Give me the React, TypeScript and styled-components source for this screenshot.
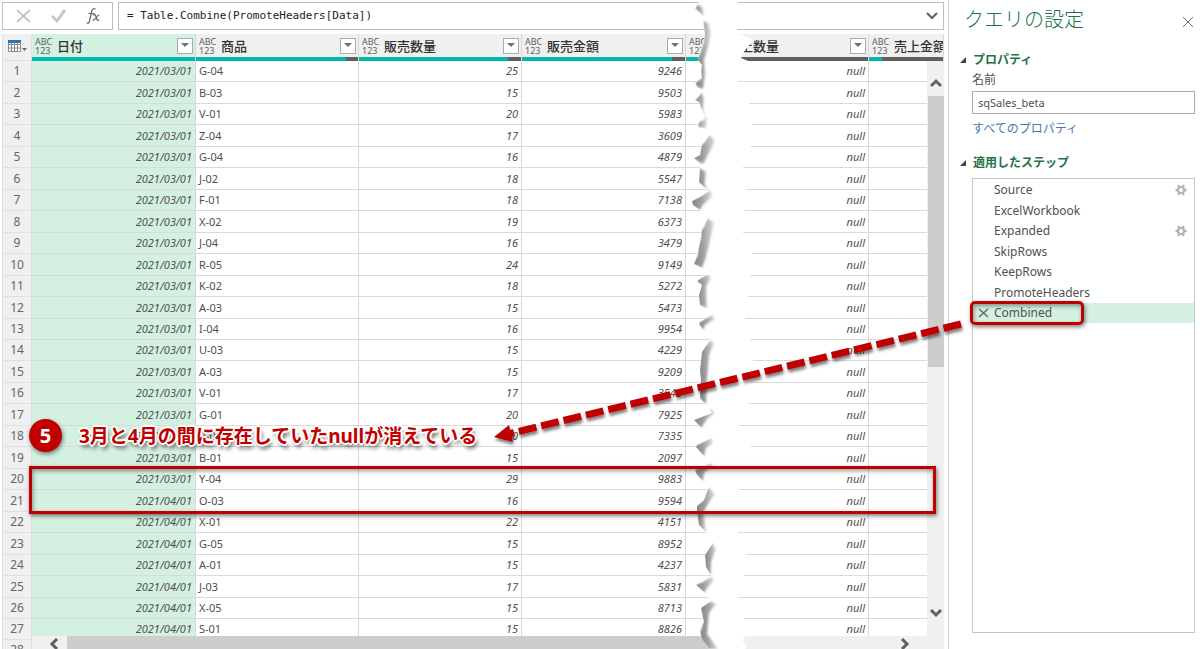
import React from "react";
import styled, { createGlobalStyle, css } from "styled-components";

const sans = `"Noto Sans", "Noto Sans CJK JP", sans-serif`;
const RED = "#c00000";

const GlobalStyle = createGlobalStyle`
  * { box-sizing: border-box; }
  html, body, #root { height: 100%; }
  body { margin: 0; background: #fff; color: #505050; font: 12px/16px ${sans}; overflow: hidden; }
  button, input { font: inherit; color: inherit; }
  button { padding: 0; border: 0; background: none; display: inline-flex; align-items: center; justify-content: center; cursor: pointer; }
`;

const Editor = styled.div`
  position: relative;
  display: grid;
  grid-template-columns: minmax(0, 1fr) 252px;
  height: 100%;
  overflow: hidden;
`;

const Workspace = styled.main`
  display: flex;
  flex-direction: column;
  gap: 4px;
  padding: 2px 4px 0 2px;
  min-width: 0;
  min-height: 0;
`;

const FormulaBar = styled.div`
  display: flex;
  gap: 5px;
  flex: 0 0 28px;
`;

const FormulaActions = styled.div`
  display: flex;
  align-items: center;
  justify-content: space-around;
  width: 111px;
  padding: 0 1px 0 4px;
  border: 1px solid #bdbdbd;
`;

const FormulaField = styled.label`
  display: flex;
  flex: 1;
  align-items: center;
  padding: 0 5px 0 8px;
  border: 1px solid #bdbdbd;
`;

const FormulaInput = styled.input`
  flex: 1;
  min-width: 0;
  padding: 0;
  border: 0;
  outline: 0;
  color: #222;
  font: 11px/16px "DejaVu Sans Mono", monospace;
`;

const GridArea = styled.div`
  position: relative;
  flex: 1;
  min-height: 0;
  overflow: hidden;
`;

const DataTable = styled.table`
  width: 100%;
  table-layout: fixed;
  border-collapse: separate;
  border-spacing: 0;
  font-size: 11px;
`;

const Col = styled.col<{ $w?: number }>`
  ${(p) => p.$w && css`width: ${p.$w}px;`}
`;

const HeadCell = styled.th<{ $selected?: boolean }>`
  height: 27px;
  padding: 0;
  background: ${(p) => (p.$selected ? "#d3f0e0" : "#f0f0f0")};
  border-right: 1px solid #d8d8d8;
  text-align: left;
  font-weight: 500;
  overflow: hidden;
`;

const HeadContent = styled.div<{ $torn?: boolean }>`
  display: flex;
  align-items: center;
  gap: ${(p) => (p.$torn ? 34 : 5)}px;
  height: 23px;
  padding: 0 2px 0 3px;
  color: #333;
  font-size: 13px;
  line-height: 20px;
  white-space: nowrap;
`;

const TypeMark = styled.span`
  flex: none;
  width: 17px;
  color: #606060;
  font: 9px/9px ${sans};
`;

const Filter = styled.button`
  flex: none;
  width: 16px;
  height: 16px;
  margin-left: auto;
  border: 1px solid #ababab;
  background: #fff;
`;

const Quality = styled.div<{ $rest: number; $lead?: number }>`
  height: 4px;
  background: ${(p) =>
    p.$lead !== undefined
      ? `linear-gradient(90deg, #01b8aa ${p.$lead}px, #606060 ${p.$lead}px)`
      : `linear-gradient(270deg, #606060 ${p.$rest}px, #01b8aa ${p.$rest}px)`};
`;

const CornerCell = styled.th`
  padding: 0 0 3px;
  background: #f0f0f0;
  border: 1px solid #e0e0e0;
  border-top: 0;
  line-height: 0;
  vertical-align: middle;
`;

const Row = styled.tr<{ $height: number }>`
  height: ${(p) => p.$height}px;
`;

const Cell = styled.td<{ $kind: "date" | "text" | "value" }>`
  padding: 0 3px;
  border-right: 1px solid #d8d8d8;
  border-bottom: 1px solid #dadada;
  line-height: 16px;
  white-space: nowrap;
  ${(p) => p.$kind !== "text" && css`text-align: right; font-style: italic;`}
  ${(p) => p.$kind === "date" && css`background: #d3f0e0;`}
`;

const IndexCell = styled.th`
  padding: 0;
  background: #f0f0f0;
  border: 1px solid #e0e0e0;
  border-top: 0;
  color: #666;
  font-size: 12px;
  font-weight: 400;
  line-height: 16px;
`;

const VerticalScroll = styled.div`
  position: absolute;
  top: 27px;
  right: 0;
  bottom: 13px;
  display: flex;
  flex-direction: column;
  align-items: center;
  width: 17px;
  padding: 16px 0 17px;
  background: #f0f0f0;
`;

const VerticalTrack = styled.div`
  flex: 1;
  width: 100%;
  padding: 7px 0 0 1px;
`;

const VerticalThumb = styled.div`
  height: 53%;
  background: #cdcdcd;
`;

const HorizontalScroll = styled.div`
  position: absolute;
  left: 30px;
  right: 0;
  bottom: 0;
  display: flex;
  align-items: center;
  gap: 7px;
  height: 13px;
  padding: 2px 33px 0 16px;
  background: #f0f0f0;
`;

const HorizontalTrack = styled.div`
  flex: 1;
  align-self: stretch;
  margin-top: -2px;
`;

const HorizontalThumb = styled.div`
  width: 80%;
  height: 100%;
  background: #cdcdcd;
`;

const Overlay = styled.svg`
  position: absolute;
  top: 0;
  left: 0;
  pointer-events: none;
`;

const Settings = styled.aside`
  display: flex;
  flex-direction: column;
  min-height: 0;
  padding: 6px 5px 16px 11px;
  border-left: 1px solid #d0d0d0;
`;

const SettingsHead = styled.header`
  display: flex;
  align-items: center;
  justify-content: space-between;
  height: 28px;
  padding-left: 4px;
`;

const Title = styled.h1`
  margin: 0;
  color: #217346;
  font-size: 20px;
  font-weight: 300;
  line-height: 28px;
`;

const SectionTitle = styled.h2<{ $gap: number }>`
  display: flex;
  align-items: center;
  gap: 7px;
  margin: ${(p) => p.$gap}px 0 0;
  color: #217346;
  font-size: 12px;
  font-weight: 700;
  line-height: 20px;
`;

const SectionBody = styled.div`
  display: flex;
  flex-direction: column;
  align-items: flex-start;
  margin-left: 12px;
`;

const NameInput = styled.input`
  width: 100%;
  height: 23px;
  margin: 1px 0 6px;
  padding: 0 5px;
  border: 1px solid #ababab;
  font-size: 11px;
`;

const NameLabel = styled.label`
  line-height: 20px;
`;

const PropertiesLink = styled.a`
  color: #4a74b0;
  text-decoration: none;
  line-height: 18px;
`;

const Steps = styled.ul`
  flex: 1;
  margin: 5px 0 0 12px;
  padding: 1px 0;
  border: 1px solid #c6c6c6;
  list-style: none;
`;

const Step = styled.li<{ $active?: boolean }>`
  display: grid;
  grid-template-columns: 21px 1fr 19px;
  align-items: center;
  justify-items: start;
  height: 20px;
  background: ${(p) => (p.$active ? "#d3f0e0" : "transparent")};

  &:nth-child(even) {
    height: 21px;
  }
`;

const StepButton = styled.button`
  grid-column: 2;
`;

const Highlight = styled.div<{ $round?: boolean }>`
  position: absolute;
  border: 3px solid ${RED};
  pointer-events: none;
  ${(p) =>
    p.$round
      ? css`top: 301px; right: 116px; width: 114px; height: 24px; border-radius: 5px;`
      : css`top: 466px; left: 29px; right: 264px; height: 48px;`}
  box-shadow: 1px 2px 4px rgba(0, 0, 0, 0.5), inset 1px 2px 4px rgba(0, 0, 0, 0.4);
`;

const Callout = styled.div`
  position: absolute;
  top: 419px;
  left: 29px;
  display: flex;
  align-items: center;
  gap: 17px;
  color: ${RED};
  font: 700 19px/28px "Noto Sans", "Noto Sans CJK JP", sans-serif;
  white-space: nowrap;
`;

const CalloutNumber = styled.span`
  width: 33px;
  height: 33px;
  border-radius: 50%;
  background: ${RED};
  color: #fff;
  font-size: 20px;
  line-height: 33px;
  text-align: center;
  box-shadow: 1px 2px 4px rgba(0, 0, 0, 0.5);
`;

const CalloutText = styled.span`
  text-shadow: -1px -1px 0 #fff, 1px -1px 0 #fff, -1px 1px 0 #fff, 1px 1px 0 #fff,
    2px 0 0 #fff, -2px 0 0 #fff, 0 2px 0 #fff, 0 -2px 0 #fff, 2px 4px 4px rgba(0, 0, 0, 0.75);
`;

type Direction = "up" | "down" | "left" | "right";
const chevrons: Record<Direction, string> = {
  up: "M1 9 6 4l5 5",
  down: "M1 3 6 8l5-5",
  left: "M9 1 4 6l5 5",
  right: "M3 1l5 5-5 5",
};
const Chevron = ({ to, weight = 3 }: { to: Direction; weight?: number }) => (
  <svg width="12" height="12" viewBox="0 0 12 12" fill="none" stroke="#606060" strokeWidth={weight}>
    <path d={chevrons[to]} />
  </svg>
);

const Gear = () => (
  <svg width="12" height="12" viewBox="0 0 12 12" fill="none" stroke="#b4b4b4">
    <circle cx="6" cy="6" r="3" strokeWidth="2.2" />
    <path d="M.5 6H3M9 6h2.500M3.200 1.200l1.300 2.200M8.800 1.200 7.500 3.400M3.200 10.800l1.300-2.200M8.800 10.800 7.500 8.600" strokeWidth="2.400" />
  </svg>
);

const Fold = () => (
  <svg width="6" height="6" viewBox="0 0 6 6"><path d="M6 0v6H0z" fill="#444" /></svg>
);

const products = "G-04 B-03 V-01 Z-04 G-04 J-02 F-01 X-02 J-04 R-05 K-02 A-03 I-04 U-03 A-03 V-01 G-01 R-04 B-01 Y-04 O-03 X-01 G-05 A-01 J-03 X-05 S-01".split(" ");
const quantities = [25, 15, 20, 17, 16, 18, 18, 19, 16, 24, 18, 15, 16, 15, 15, 17, 20, 20, 15, 29, 16, 22, 15, 15, 17, 15, 15];
const amounts = [9246, 9503, 5983, 3609, 4879, 5547, 7138, 6373, 3479, 9149, 5272, 5473, 9954, 4229, 9209, 3543, 7925, 7335, 2097, 9883, 9594, 4151, 8952, 4237, 5831, 8713, 8826];
const rows = products.map((product, i) => ({
  product,
  date: i < 20 ? "2021/03/01" : "2021/04/01",
  quantity: quantities[i],
  amount: amounts[i],
}));
const rowHeight = (i: number) => Math.round((i + 1) * 21.46) - Math.round(i * 21.46);

const columns = [
  { name: "日付", rest: 0, selected: true },
  { name: "商品", rest: 12 },
  { name: "販売数量", rest: 13 },
  { name: "販売金額", rest: 13 },
  { name: "上数量", rest: 0, lead: 30, torn: true },
  { name: "売上金額", rest: 0, lead: 13, open: true },
];

const steps = [
  { name: "Source", gear: true },
  { name: "ExcelWorkbook" },
  { name: "Expanded", gear: true },
  { name: "SkipRows" },
  { name: "KeepRows" },
  { name: "PromoteHeaders" },
  { name: "Combined", active: true },
];

const gap =
  "M702 0 697 4 695 9 699 12 704 17 703 21 705 35 699 55 698 60 702 65 701 72 702 78 695 82 697 87 702 90 700 95 695 100 699 102 701 108 704 115 699 122 698 127 706 130 709 135 702 145 700 155 694 158 700 164 700 168 699 182 707 190 709 191 700 197 692 201 693 205 701 211 708 218 702 230 700 243 697 256 694 264 702 268 709 274 701 278 697 281 702 285 699 295 700 305 708 310 711 315 700 322 699 324 703 330 710 340 702 352 701 362 700 370 701 380 700 398 709 409 712 413 694 420 707 434 711 438 697 445 696 447 705 457 711 463 695 470 697 475 709 487 704 500 697 506 697 512 699 525 706 532 713 543 705 555 706 567 711 576 696 585 704 592 711 601 701 608 704 622 700 630 702 640 710 649 H745 L747 645 742 640 746 636 744 619 738 597 744 575 746 554 738 532 750 520 739 490 744 470 751 447 739 425 748 404 753 361 750 340 745 318 748 296 752 254 743 232 746 189 743 168 751 146 752 124 749 103 738 82 748 61 741 58 745 50 754 40 742 35 737 30 738 0Z";

const shades = [
  "M695 8 698 5 702 7 704 15 701 15 699 12Z",
  "M703 21 708 23 711 33 708 47 704 60 705 75 703 89 697 87 695 83 701 79 700 65 696 60 700 54 704 42 704 34Z",
  "M701 92 704 98 703 110 707 118 706 128 698 127 697 123 704 120 706 117 701 109 699 103 693 102 696 99Z",
  "M709 135 715 140 712 147 703 164 692 158 698 155 699 146 705 142Z",
  "M699 168 706 172 705 184 708 190 698 184Z",
  "M710 190 712 196 702 206 700 210 691 206 690 201Z",
  "M706 218 714 222 710 240 706 257 702 268 692 264 698 255 697 245 701 238 700 230 704 227Z",
  "M708 274 711 278 706 287 707 308 698 305 697 295 700 286 695 281Z",
  "M712 315 715 319 705 325 703 330 697 323Z",
  "M711 340 714 344 709 355 707 380 706 404 698 398 698 371 698 352Z",
  "M710 409 715 413 707 419 701 428 692 420Z",
  "M711 438 713 443 706 448 704 457 695 450 694 446Z",
  "M711 463 713 466 705 472 702 482 693 471 703 467Z",
  "M708 487 715 494 708 504 703 513 695 512 695 506 702 501 704 493Z",
  "M697 514 704 514 706 533 697 525Z",
  "M711 542 716 549 711 562 711 575 704 567 703 554 707 550Z",
  "M711 577 714 580 708 587 704 593 694 585 703 582Z",
  "M709 601 716 604 709 613 707 634 718 649 708 649 698 635 702 628 699 608Z",
];

export default function App() {
  return (
    <Editor>
      <GlobalStyle />
      <Workspace>
        <FormulaBar>
          <FormulaActions>
            <button aria-label="キャンセル">
              <svg width="16" height="16" fill="none" stroke="#c4c4c4" strokeWidth="2"><path d="m1 2 13 12M14 2 1 14" /></svg>
            </button>
            <button aria-label="確定">
              <svg width="16" height="16" fill="none" stroke="#c8c8c8" strokeWidth="3"><path d="m1 8 5 5 8-11" /></svg>
            </button>
            <button aria-label="関数">
              <svg width="16" height="18" fill="none" stroke="#666" strokeWidth="1.2" strokeLinecap="round">
                <path d="M9 2C7.500 1 6.300 2 5.800 4L3.500 14c-.5 2-1.300 2.800-2.500 2M3 6.500h5M7.500 8c1-.8 1.800-.5 2.300 1l1 3.200c.4 1.200 1.200 1.500 2.200.6M13 8c-2-.5-3.500 5.500-6 5.200" />
              </svg>
            </button>
          </FormulaActions>
          <FormulaField>
            <FormulaInput aria-label="数式" defaultValue="= Table.Combine(PromoteHeaders[Data])" />
            <button aria-label="数式バーの展開"><Chevron to="down" weight={2} /></button>
          </FormulaField>
        </FormulaBar>

        <GridArea>
          <DataTable>
            <colgroup>
              <Col $w={30} /><Col $w={164} /><Col $w={163} /><Col $w={163} /><Col $w={164} /><Col $w={183} /><Col />
            </colgroup>
            <thead>
              <tr>
                <CornerCell>
                  <button aria-label="テーブル">
                    <svg width="21" height="16" viewBox="0 0 21 16">
                      <path d="M1.500 2.500h12v11h-12zM1.500 6.500h12M1.500 10h12M4.500 5v8M7.500 5v8M10.500 5v8" fill="#fff" stroke="#8a8a8a" />
                      <path d="M1 2h13v3H1z" fill="#2f75b5" />
                      <path d="M15 10h5l-2.500 3z" fill="#666" />
                    </svg>
                  </button>
                </CornerCell>
                {columns.map((c) => (
                  <HeadCell key={c.name} $selected={c.selected}>
                    <HeadContent $torn={c.torn}>
                      <TypeMark>ABC<br />123</TypeMark>
                      {c.name}
                      {!c.open && (
                        <Filter aria-label={`${c.name} フィルター`}>
                          <svg width="8" height="5"><path d="M0 0h8L4 4z" fill="#707070" /></svg>
                        </Filter>
                      )}
                    </HeadContent>
                    <Quality $rest={c.rest} $lead={c.lead} />
                  </HeadCell>
                ))}
              </tr>
            </thead>
            <tbody>
              {rows.map((r, i) => (
                <Row key={i} $height={rowHeight(i)}>
                  <IndexCell scope="row">{i + 1}</IndexCell>
                  <Cell $kind="date">{r.date}</Cell>
                  <Cell $kind="text">{r.product}</Cell>
                  <Cell $kind="value">{r.quantity}</Cell>
                  <Cell $kind="value">{r.amount}</Cell>
                  <Cell $kind="value">null</Cell>
                  <Cell $kind="value" />
                </Row>
              ))}
              <Row $height={21}>
                <IndexCell scope="row">28</IndexCell>
                <Cell $kind="date" />
              </Row>
            </tbody>
          </DataTable>
          <VerticalScroll>
            <button aria-label="上へ"><Chevron to="up" /></button>
            <VerticalTrack><VerticalThumb /></VerticalTrack>
            <button aria-label="下へ"><Chevron to="down" /></button>
          </VerticalScroll>
          <HorizontalScroll>
            <button aria-label="左へ"><Chevron to="left" /></button>
            <HorizontalTrack><HorizontalThumb /></HorizontalTrack>
            <button aria-label="右へ"><Chevron to="right" /></button>
          </HorizontalScroll>
        </GridArea>
      </Workspace>

      <Settings>
        <SettingsHead>
          <Title>クエリの設定</Title>
          <button aria-label="閉じる">
            <svg width="14" height="14" fill="none" stroke="#777"><path d="m2 4 10 10M12 4 2 14" /></svg>
          </button>
        </SettingsHead>
        <SectionTitle $gap={16}><Fold />プロパティ</SectionTitle>
        <SectionBody>
          <NameLabel htmlFor="query-name">名前</NameLabel>
          <NameInput id="query-name" defaultValue="sqSales_beta" />
          <PropertiesLink href="#properties">すべてのプロパティ</PropertiesLink>
        </SectionBody>
        <SectionTitle $gap={15}><Fold />適用したステップ</SectionTitle>
        <Steps>
          {steps.map((s) => (
            <Step key={s.name} $active={s.active}>
              {s.active && (
                <button aria-label="ステップの削除">
                  <svg width="20" height="12" fill="none" stroke="#666" strokeWidth="1.500"><path d="m6 2 9 8M15 2 6 10" /></svg>
                </button>
              )}
              <StepButton>{s.name}</StepButton>
              {s.gear && <button aria-label={`${s.name} の設定`}><Gear /></button>}
            </Step>
          ))}
        </Steps>
      </Settings>

      <Overlay width="1200" height="649" viewBox="0 0 1200 649">
        <defs>
          <linearGradient id="shade">
            <stop offset="0" stopColor="#808080" />
            <stop offset="0.5" stopColor="#a0a0a0" />
            <stop offset="1" stopColor="#dcdcdc" />
          </linearGradient>
          <clipPath id="torn"><path d={gap} /></clipPath>
          <filter id="soft" filterUnits="userSpaceOnUse" x="680" y="-10" width="50" height="670">
            <feGaussianBlur stdDeviation="1" />
          </filter>
        </defs>
        <path d={gap} fill="#fff" />
        <g clipPath="url(#torn)">
          <g filter="url(#soft)">
            {shades.map((d) => <path key={d} d={d} fill="url(#shade)" />)}
          </g>
        </g>
      </Overlay>
      <Highlight />
      <Highlight $round />
      <Overlay width="1200" height="649" viewBox="0 0 1200 649">
        <defs>
          <filter id="cast" x="-5%" y="-10%" width="110%" height="130%">
            <feDropShadow dx="1" dy="3" stdDeviation="1.500" floodOpacity="0.5" />
          </filter>
        </defs>
        <g filter="url(#cast)">
          <path d="M961 324 508 434" stroke={RED} strokeWidth="7" strokeDasharray="18 5" />
          <path d="m494 437 15-12 4 17z" fill={RED} />
        </g>
      </Overlay>
      <Callout>
        <CalloutNumber>5</CalloutNumber>
        <CalloutText>3月と4月の間に存在していたnullが消えている</CalloutText>
      </Callout>
    </Editor>
  );
}
